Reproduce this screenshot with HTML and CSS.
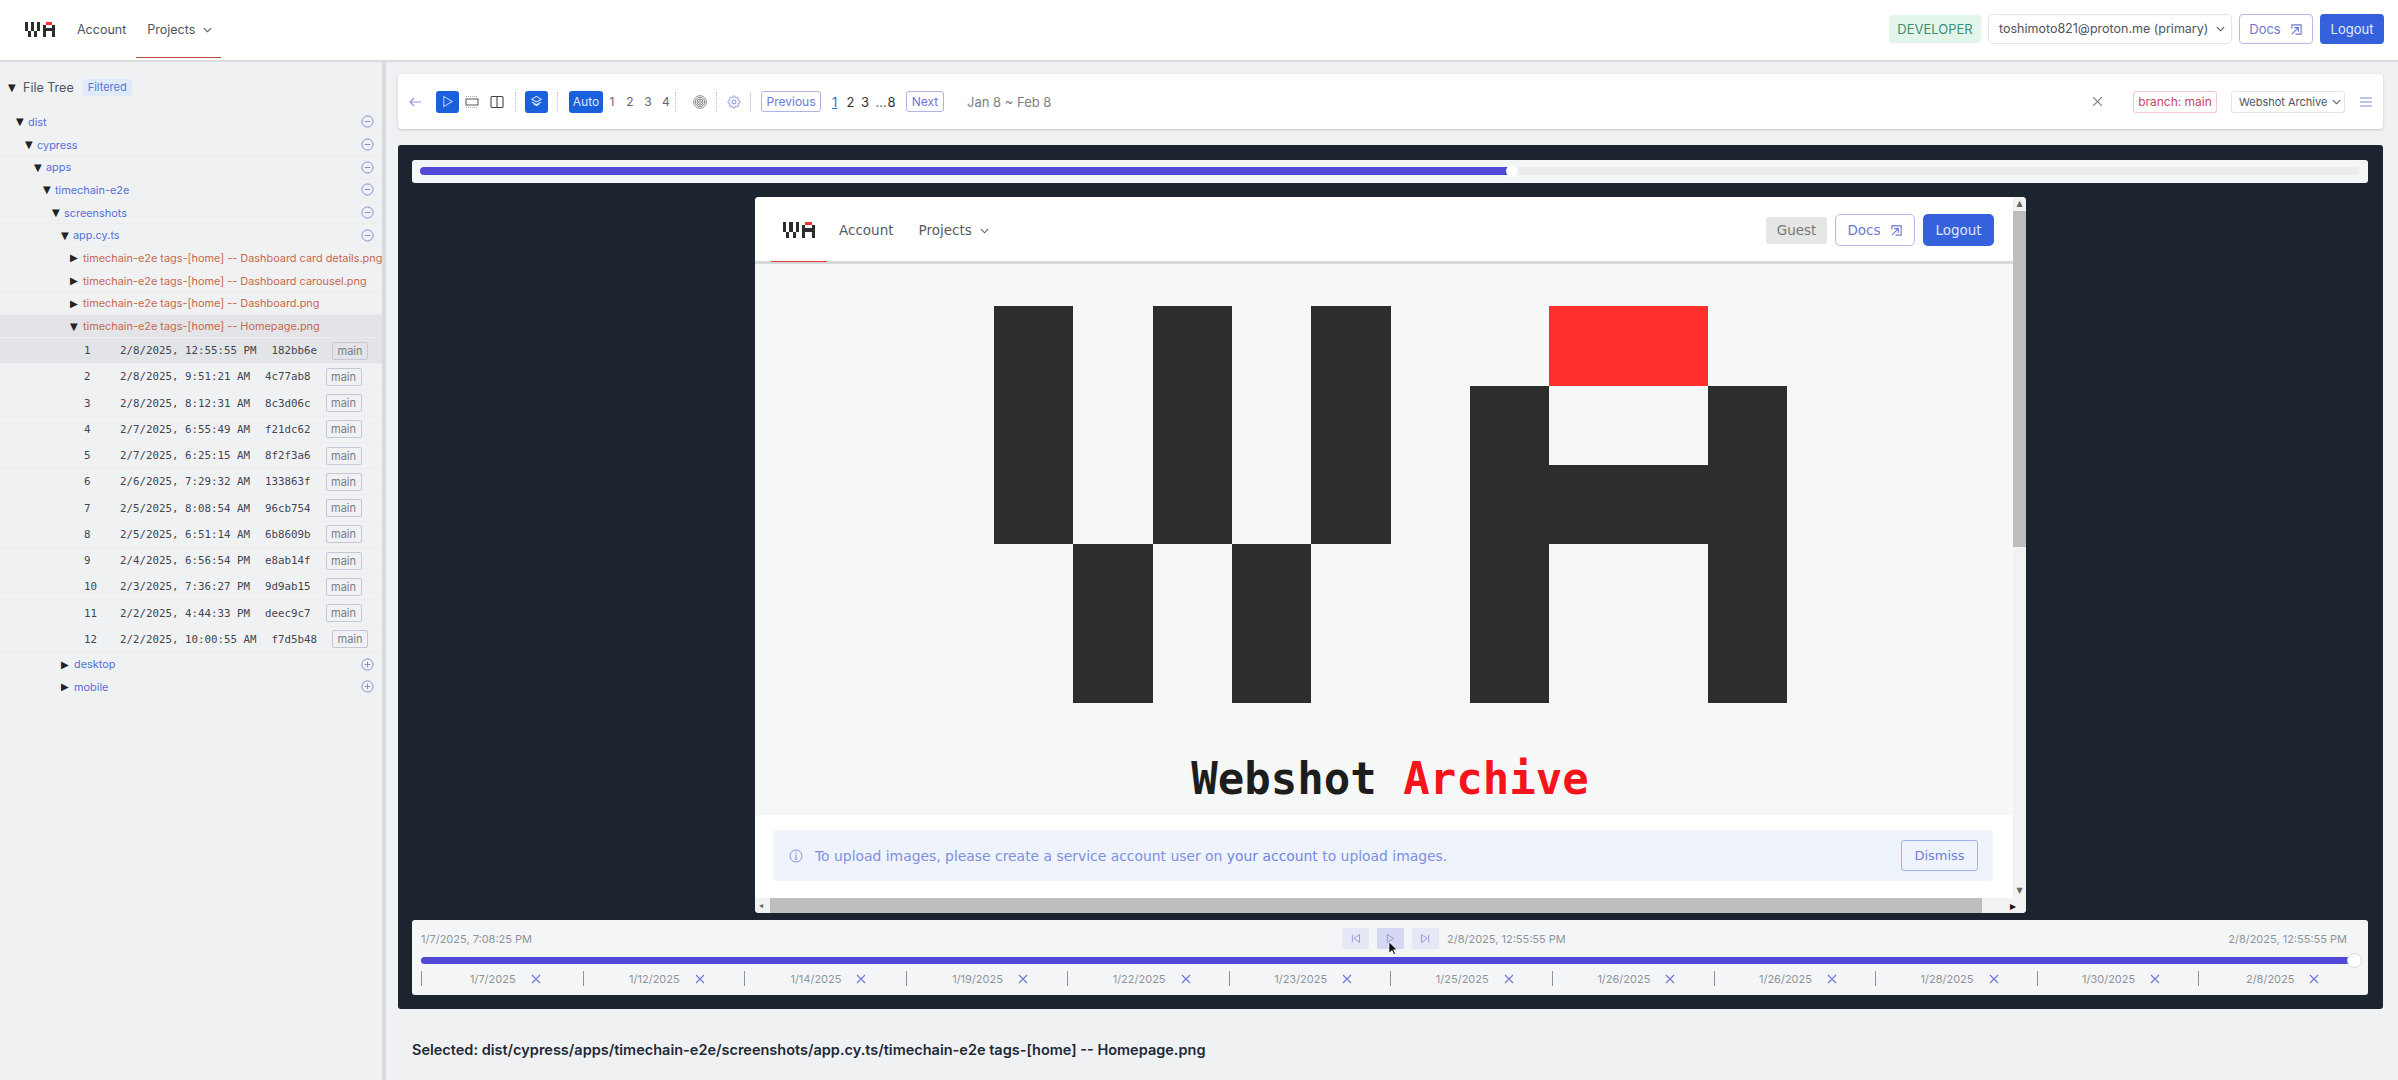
FILE: index.html
```html
<!DOCTYPE html>
<html lang="en">
<head>
    <meta charset="UTF-8">
    <title>Webshot Archive</title>
    <link rel="stylesheet" href="styles.css">
</head>
<body>
    <svg class="defs" width="0" height="0">
        <symbol id="wa" viewBox="0 0 10 5" shape-rendering="crispEdges">
            <path d="M0 0h1v3H0zM1 3h1v2H1zM2 0h1v3H2zM3 3h1v2H3zM4 0h1v3H4zM6 1h1v1h2V1h1v4H9V3H7v2H6z" fill="#2d2d2d"/>
            <rect x="7" y="0" width="2" height="1" fill="#ff302c"/>
        </symbol>
        <symbol id="chev" viewBox="0 0 10 6"><path d="M1 1l4 4 4-4" fill="none" stroke="currentColor" stroke-width="1.2"/></symbol>
        <symbol id="ext" viewBox="0 0 14 14"><path d="M2 6V2H12V12H6M2 12L9 5M4.500 5H9V9.500" fill="none" stroke="currentColor" stroke-width="1.2"/></symbol>
        <symbol id="minus" viewBox="0 0 14 14"><circle cx="7" cy="7" r="6" fill="none" stroke="currentColor"/><path d="M4 7h6" stroke="currentColor"/></symbol>
        <symbol id="plus" viewBox="0 0 14 14"><circle cx="7" cy="7" r="6" fill="none" stroke="currentColor"/><path d="M4 7h6M7 4v6" stroke="currentColor"/></symbol>
        <symbol id="x" viewBox="0 0 10 10"><path d="M1 1l8 8M9 1l-8 8" fill="none" stroke="currentColor" stroke-width="1.1"/></symbol>
    </svg>

    <header class="topbar">
        <svg class="logo-small"><use href="#wa"/></svg>
        <a class="nav-link">Account</a>
        <a class="nav-link nav-active">Projects <svg class="chev"><use href="#chev"/></svg></a>
        <div class="topbar-right">
            <span class="role">DEVELOPER</span>
            <span class="account-select">toshimoto821@proton.me (primary) <svg class="chev"><use href="#chev"/></svg></span>
            <a class="btn-docs">Docs <svg class="ext"><use href="#ext"/></svg></a>
            <a class="btn-logout">Logout</a>
        </div>
    </header>

    <div class="layout">
        <aside class="sidebar">
            <div class="tree-title"><span class="arrow">▼</span> File Tree <span class="filtered">Filtered</span></div>

            <div class="row d0"><span class="arrow">▼</span><span class="folder">dist</span><svg class="toggle"><use href="#minus"/></svg></div>
            <div class="row d1"><span class="arrow">▼</span><span class="folder">cypress</span><svg class="toggle"><use href="#minus"/></svg></div>
            <div class="row d2"><span class="arrow">▼</span><span class="folder">apps</span><svg class="toggle"><use href="#minus"/></svg></div>
            <div class="row d3"><span class="arrow">▼</span><span class="folder">timechain-e2e</span><svg class="toggle"><use href="#minus"/></svg></div>
            <div class="row d4"><span class="arrow">▼</span><span class="folder">screenshots</span><svg class="toggle"><use href="#minus"/></svg></div>
            <div class="row d5"><span class="arrow">▼</span><span class="folder">app.cy.ts</span><svg class="toggle"><use href="#minus"/></svg></div>
            <div class="row d6"><span class="arrow">▶</span><span class="file">timechain-e2e tags-[home] -- Dashboard card details.png</span></div>
            <div class="row d6"><span class="arrow">▶</span><span class="file">timechain-e2e tags-[home] -- Dashboard carousel.png</span></div>
            <div class="row d6"><span class="arrow">▶</span><span class="file">timechain-e2e tags-[home] -- Dashboard.png</span></div>
            <div class="row d6 selected"><span class="arrow">▼</span><span class="file">timechain-e2e tags-[home] -- Homepage.png</span></div>

            <div class="commit selected"><span class="num">1</span><span>2/8/2025, 12:55:55 PM</span><span>182bb6e</span><span class="tag">main</span></div>
            <div class="commit"><span class="num">2</span><span>2/8/2025, 9:51:21 AM</span><span>4c77ab8</span><span class="tag">main</span></div>
            <div class="commit"><span class="num">3</span><span>2/8/2025, 8:12:31 AM</span><span>8c3d06c</span><span class="tag">main</span></div>
            <div class="commit"><span class="num">4</span><span>2/7/2025, 6:55:49 AM</span><span>f21dc62</span><span class="tag">main</span></div>
            <div class="commit"><span class="num">5</span><span>2/7/2025, 6:25:15 AM</span><span>8f2f3a6</span><span class="tag">main</span></div>
            <div class="commit"><span class="num">6</span><span>2/6/2025, 7:29:32 AM</span><span>133863f</span><span class="tag">main</span></div>
            <div class="commit"><span class="num">7</span><span>2/5/2025, 8:08:54 AM</span><span>96cb754</span><span class="tag">main</span></div>
            <div class="commit"><span class="num">8</span><span>2/5/2025, 6:51:14 AM</span><span>6b8609b</span><span class="tag">main</span></div>
            <div class="commit"><span class="num">9</span><span>2/4/2025, 6:56:54 PM</span><span>e8ab14f</span><span class="tag">main</span></div>
            <div class="commit"><span class="num">10</span><span>2/3/2025, 7:36:27 PM</span><span>9d9ab15</span><span class="tag">main</span></div>
            <div class="commit"><span class="num">11</span><span>2/2/2025, 4:44:33 PM</span><span>deec9c7</span><span class="tag">main</span></div>
            <div class="commit"><span class="num">12</span><span>2/2/2025, 10:00:55 AM</span><span>f7d5b48</span><span class="tag">main</span></div>

            <div class="row d5b"><span class="arrow">▶</span><span class="folder">desktop</span><svg class="toggle"><use href="#plus"/></svg></div>
            <div class="row d5b"><span class="arrow">▶</span><span class="folder">mobile</span><svg class="toggle"><use href="#plus"/></svg></div>
        </aside>

        <main class="main">
            <div class="toolbar">
                <svg class="tool-icon back" viewBox="0 0 14 14"><path d="M13 7H2M6 3L2 7l4 4" fill="none" stroke="#8f95e6" stroke-width="1.2"/></svg>
                <span class="tool-btn"><svg viewBox="0 0 14 14"><path d="M3 1.500l9 5.500-9 5.500z" fill="none" stroke="#b8c8f5" stroke-width="1.2"/></svg></span>
                <svg class="tool-icon" viewBox="0 0 14 14"><rect x="1" y="4" width="12" height="6" fill="none" stroke="#555" stroke-width="1"/><path d="M1 1.500h12M1 12.500h12" stroke="#aaa" stroke-dasharray="1 1"/></svg>
                <svg class="tool-icon" viewBox="0 0 14 14"><rect x="1" y="1.500" width="12" height="11" rx="1" fill="none" stroke="#444" stroke-width="1.1"/><path d="M7 1.500v11" stroke="#444" stroke-width="1.1"/></svg>
                <i class="sep dotted"></i>
                <span class="tool-btn"><svg viewBox="0 0 14 14"><path d="M7 1.500L12 4.500 7 7.500 2 4.500zM2 7.500l5 3 5-3M4 9.500l3 2 3-2" fill="none" stroke="#dce5fb" stroke-width="1.1"/></svg></span>
                <i class="sep dotted sep-wide"></i>
                <span class="auto">Auto</span>
                <span class="zoom-level">1</span>
                <span class="zoom-level">2</span>
                <span class="zoom-level">3</span>
                <span class="zoom-level">4</span>
                <i class="sep dotted sep-wide2"></i>
                <svg class="tool-icon print" viewBox="0 0 14 14" fill="none" stroke="#85878b"><circle cx="7" cy="7" r="6.300"/><circle cx="7" cy="7" r="4.600"/><circle cx="7" cy="7" r="3"/><circle cx="7" cy="7" r="1.400"/></svg>
                <i class="sep dotted"></i>
                <svg class="tool-icon gear" viewBox="0 0 24 24" fill="none" stroke="#8086dd" stroke-width="1.5"><path d="M10.343 3.940c.09-.542.56-.94 1.110-.94h1.093c.55 0 1.020.398 1.110.94l.149.894c.07.424.384.764.78.93.398.164.855.142 1.205-.108l.737-.527a1.125 1.125 0 011.450.12l.773.774c.39.389.44 1.002.12 1.450l-.527.737c-.25.35-.272.806-.107 1.204.165.397.505.71.93.78l.893.15c.543.09.94.56.94 1.109v1.094c0 .55-.397 1.020-.94 1.110l-.893.149c-.425.07-.765.383-.93.78-.165.398-.143.854.107 1.204l.527.738c.32.447.269 1.060-.12 1.450l-.774.773a1.125 1.125 0 01-1.449.12l-.738-.527c-.35-.25-.806-.272-1.203-.107-.397.165-.71.505-.781.929l-.149.894c-.09.542-.56.94-1.110.94h-1.094c-.55 0-1.019-.398-1.110-.94l-.148-.894c-.071-.424-.384-.764-.781-.93-.398-.164-.854-.142-1.204.108l-.738.527c-.447.32-1.060.269-1.450-.12l-.773-.774a1.125 1.125 0 01-.12-1.450l.527-.737c.25-.35.273-.806.108-1.204-.165-.397-.505-.71-.93-.78l-.894-.15c-.542-.09-.94-.56-.94-1.109v-1.094c0-.55.398-1.020.94-1.110l.894-.149c.424-.07.765-.383.93-.78.165-.398.143-.854-.107-1.204l-.527-.738a1.125 1.125 0 01.12-1.450l.773-.773a1.125 1.125 0 011.450-.12l.737.527c.35.25.807.272 1.204.107.397-.165.71-.505.78-.929l.15-.894z"/><circle cx="12" cy="12" r="3"/></svg>
                <i class="sep"></i>
                <a class="page-btn prev">Previous</a>
                <span class="pages"><u>1</u><span>2</span><span>3</span><em>...</em><span>8</span></span>
                <a class="page-btn next">Next</a>
                <span class="range">Jan 8 ~ Feb 8</span>
                <div class="toolbar-right">
                    <svg class="close" viewBox="0 0 10 10"><use href="#x"/></svg>
                    <span class="branch">branch: main</span>
                    <span class="project">Webshot Archive <svg class="chev"><use href="#chev"/></svg></span>
                    <svg class="menu" viewBox="0 0 14 10"><path d="M1 1h12M1 5h12M1 9h12" stroke="#7f85dc" stroke-width="1"/></svg>
                </div>
            </div>

            <section class="panel">
                <div class="progress-card">
                    <div class="track"><div class="fill"></div><span class="knob"></span></div>
                </div>

                <div class="frame">
                    <div class="frame-body">
                        <div class="frame-page">
                            <div class="frame-nav">
                                <svg class="frame-logo"><use href="#wa"/></svg>
                                <a class="frame-link">Account</a>
                                <a class="frame-link">Projects <svg class="chev"><use href="#chev"/></svg></a>
                                <span class="frame-underline"></span>
                                <div class="frame-right">
                                    <span class="guest">Guest</span>
                                    <a class="frame-docs">Docs <svg class="ext"><use href="#ext"/></svg></a>
                                    <a class="frame-logout">Logout</a>
                                </div>
                            </div>
                            <div class="hero">
                                <svg class="hero-logo"><use href="#wa"/></svg>
                                <div class="wordmark">Webshot <span>Archive</span></div>
                            </div>
                            <div class="notice-wrap">
                                <div class="notice">
                                    <svg class="info" viewBox="0 0 14 14"><circle cx="7" cy="7" r="6" fill="none" stroke="currentColor"/><path d="M7 6.200v4M5.800 10.200h2.400M6 6.200h1" fill="none" stroke="currentColor"/><circle cx="7" cy="4" r=".7" fill="currentColor"/></svg>
                                    <span>To upload images, please create a service account user on <a>your account</a> to upload images.</span>
                                    <button class="dismiss">Dismiss</button>
                                </div>
                            </div>
                        </div>
                        <div class="vscroll">
                            <span class="scroll-arrow">▲</span>
                            <div class="vthumb"></div>
                            <span class="scroll-arrow">▼</span>
                        </div>
                    </div>
                    <div class="hscroll">
                        <span class="scroll-arrow">◂</span>
                        <div class="hthumb"></div>
                        <span class="scroll-arrow dark">▸</span>
                    </div>
                </div>

                <div class="timeline">
                    <div class="time-row">
                        <span>1/7/2025, 7:08:25 PM</span>
                        <div class="controls">
                            <span class="ctl"><svg viewBox="0 0 14 14"><path d="M3 2v10M12 2L5 7l7 5z" fill="none" stroke="#7f85dc"/></svg></span>
                            <span class="ctl ctl-on"><svg viewBox="0 0 14 14"><path d="M3 2l8 5-8 5z" fill="none" stroke="#7f85dc"/></svg></span>
                            <span class="ctl"><svg viewBox="0 0 14 14"><path d="M11 2v10M2 2l7 5-7 5z" fill="none" stroke="#7f85dc"/></svg></span>
                            <span>2/8/2025, 12:55:55 PM</span>
                        </div>
                        <span class="time-end">2/8/2025, 12:55:55 PM</span>
                    </div>
                    <div class="time-bar"><span class="time-knob"></span></div>
                    <div class="ticks">
                        <div class="tick">1/7/2025 <svg><use href="#x"/></svg></div>
                        <div class="tick">1/12/2025 <svg><use href="#x"/></svg></div>
                        <div class="tick">1/14/2025 <svg><use href="#x"/></svg></div>
                        <div class="tick">1/19/2025 <svg><use href="#x"/></svg></div>
                        <div class="tick">1/22/2025 <svg><use href="#x"/></svg></div>
                        <div class="tick">1/23/2025 <svg><use href="#x"/></svg></div>
                        <div class="tick">1/25/2025 <svg><use href="#x"/></svg></div>
                        <div class="tick">1/26/2025 <svg><use href="#x"/></svg></div>
                        <div class="tick">1/26/2025 <svg><use href="#x"/></svg></div>
                        <div class="tick">1/28/2025 <svg><use href="#x"/></svg></div>
                        <div class="tick">1/30/2025 <svg><use href="#x"/></svg></div>
                        <div class="tick">2/8/2025 <svg><use href="#x"/></svg></div>
                    </div>
                    <svg class="cursor" viewBox="0 0 10 15"><path d="M1 1v11l3-2.500 2 4 1.500-.7-2-4H9z" fill="#111" stroke="#fff" stroke-width=".6"/></svg>
                </div>
            </section>

            <div class="selected-path">Selected: dist/cypress/apps/timechain-e2e/screenshots/app.cy.ts/timechain-e2e tags-[home] -- Homepage.png</div>
        </main>
    </div>
</body>
</html>
```

FILE: styles.css
```css
* {
    box-sizing: border-box;
}
body {
    margin: 0;
    height: 1080px;
    overflow: hidden;
    background-color: #f0f1f3;
    font-family: Inter, "Liberation Sans", sans-serif;
    font-size: 13px;
    color: #374151;
}
.defs {
    position: absolute;
}
.chev {
    width: 9px;
    height: 6px;
    margin-left: 4px;
    vertical-align: 1px;
}

/* top bar */
.topbar {
    height: 62px;
    background-color: #fffffd;
    border-bottom: 2px solid #dcdde0;
    display: flex;
    align-items: center;
    padding-left: 25px;
    padding-right: 14px;
    padding-bottom: 2px;
}
.logo-small {
    width: 30px;
    height: 15px;
    margin-right: 22px;
}
.nav-link {
    color: #4b5563;
    margin-right: 21px;
    font-size: 12.500px;
}
.nav-active {
    position: relative;
}
.nav-active::after {
    content: "";
    position: absolute;
    left: -11px;
    right: -9px;
    top: 35px;
    height: 1px;
    background-color: #b5483f;
}
.topbar-right {
    margin-left: auto;
    display: flex;
    align-items: center;
}
.role {
    width: 92px;
    height: 28px;
    line-height: 28px;
    text-align: center;
    background-color: #e2f5ea;
    color: #3f8f73;
    border-radius: 3px;
    margin-right: 7px;
}
.account-select {
    width: 244px;
    height: 30px;
    line-height: 28px;
    border: 1px solid #e2e4e8;
    border-radius: 5px;
    padding-left: 10px;
    background-color: #fff;
    color: #4b5563;
    margin-right: 7px;
    font-size: 12.500px;
    white-space: nowrap;
}
.btn-docs {
    width: 74px;
    height: 30px;
    border: 1px solid #b4b9ea;
    border-radius: 4px;
    color: #6e78d2;
    display: flex;
    align-items: center;
    justify-content: center;
    margin-right: 7px;
}
.ext {
    width: 13px;
    height: 13px;
    margin-left: 9px;
}
.btn-logout {
    width: 64px;
    height: 30px;
    line-height: 30px;
    text-align: center;
    background-color: #3561dc;
    color: #e4e9fb;
    border-radius: 4px;
}

/* page columns */
.layout {
    display: flex;
    height: 1018px;
}
.sidebar {
    width: 386px;
    flex-shrink: 0;
    border-right: 4px solid #d9dadd;
    font-size: 10.900px;
    padding-top: 16px;
}
.tree-title {
    height: 18px;
    margin-bottom: 15px;
    padding-left: 8px;
    display: flex;
    align-items: center;
    color: #4b5563;
    font-size: 12.500px;
}
.tree-title .arrow {
    margin-right: 7px;
}
.filtered {
    margin-left: 9px;
    background-color: #dfeafa;
    color: #5a74d8;
    padding: 0 5px;
    height: 17px;
    line-height: 17px;
    border-radius: 3px;
    font-size: 11px;
}
.arrow {
    font-family: "DejaVu Sans", sans-serif;
    font-size: 10px;
    color: #222;
    width: 8px;
    flex-shrink: 0;
}
.row {
    height: 22.700px;
    display: flex;
    align-items: center;
    border-bottom: 1px solid #ebecee;
    white-space: nowrap;
    padding-right: 8px;
}
.row .arrow {
    margin-left: -2px;
    margin-right: 4px;
}
.d0 { padding-left: 18px; }
.d1 { padding-left: 27px; }
.d2 { padding-left: 36px; }
.d3 { padding-left: 45px; }
.d4 { padding-left: 54px; }
.d5 { padding-left: 63px; }
.d5b { padding-left: 63px; border-bottom: none; }
.row.d5b .arrow { margin-right: 5px; }
.d6 { padding-left: 72px; padding-right: 0; }
.row.d6 .arrow { margin-right: 5px; }
.selected {
    background-color: #e2e4e7;
}
.folder {
    color: #5570d8;
}
.file {
    color: #c8694f;
}
.toggle {
    margin-left: auto;
    width: 13px;
    height: 13px;
    color: #7d86d8;
}
.commit {
    height: 26.250px;
    display: flex;
    align-items: center;
    gap: 15px;
    font-family: "DejaVu Sans Mono", monospace;
    font-size: 10.800px;
    color: #3f4650;
    padding-left: 84px;
    border-bottom: 1px solid #ebecee;
    white-space: nowrap;
}
.commit .num {
    width: 21px;
    flex-shrink: 0;
}
.tag {
    font-family: Inter, sans-serif;
    font-size: 11px;
    color: #777d87;
    border: 1px solid #c4c8d6;
    border-radius: 2px;
    width: 36px;
    height: 18px;
    line-height: 16px;
    text-align: center;
}

/* main column */
.main {
    flex: 1;
    padding: 12px 15px 0 12px;
    min-width: 0;
}
.toolbar {
    height: 55px;
    background-color: #fff;
    border-radius: 4px;
    box-shadow: 0 1px 3px rgba(0, 0, 0, 0.18);
    display: flex;
    align-items: center;
    padding-left: 10px;
    font-size: 12px;
}
.tool-icon {
    width: 14px;
    height: 14px;
    margin-right: 11px;
}
.back {
    margin-right: 14px;
}
.tool-btn {
    width: 23px;
    height: 22px;
    background-color: #1a5fdc;
    border-radius: 3px;
    display: flex;
    align-items: center;
    justify-content: center;
    margin-right: 6px;
}
.tool-btn svg {
    width: 13px;
    height: 13px;
}
.sep {
    width: 0;
    height: 20px;
    border-left: 1px solid #d4d6e4;
    margin: 0 9px 0 0;
}
.sep.dotted {
    border-left-style: dotted;
    border-color: #b8bbd8;
}
.sep-wide {
    margin-left: 3px;
    margin-right: 11px;
}
.sep-wide2 {
    margin-right: 17px;
}
.auto {
    width: 34px;
    height: 22px;
    line-height: 22px;
    text-align: center;
    background-color: #1a5fdc;
    color: #dfe7fb;
    border-radius: 3px;
}
.zoom-level {
    width: 18px;
    text-align: center;
    color: #5f6570;
}
.print {
    margin-right: 9px;
}
.gear {
    width: 16px;
    height: 16px;
    margin-right: 8px;
}
.page-btn {
    height: 21px;
    line-height: 19px;
    border: 1px solid #b0b3e8;
    border-radius: 3px;
    text-align: center;
    color: #6f75d8;
}
.prev {
    width: 60px;
    margin-left: 1px;
}
.next {
    width: 38px;
}
.pages {
    width: 85px;
    padding-left: 11px;
    display: flex;
    color: #333;
    font-size: 13px;
}
.pages u {
    color: #2f6fe0;
    width: 14.500px;
}
.pages span {
    width: 14.500px;
}
.pages em {
    font-style: normal;
    color: #666;
    width: 12px;
}
.range {
    margin-left: 23px;
    font-size: 13px;
    color: #7b8089;
}
.toolbar-right {
    margin-left: auto;
    display: flex;
    align-items: center;
}
.close {
    width: 11px;
    height: 11px;
    color: #7b8089;
    margin-right: 30px;
}
.branch {
    width: 84px;
    height: 22px;
    line-height: 20px;
    text-align: center;
    border: 1px solid #f2c6d2;
    border-radius: 3px;
    color: #c8466c;
    margin-right: 14px;
}
.project {
    width: 114px;
    height: 22px;
    line-height: 20px;
    border: 1px solid #e1e3e9;
    border-radius: 3px;
    padding-left: 7px;
    white-space: nowrap;
    color: #4b5563;
    font-size: 11px;
    margin-right: 14px;
}
.project .chev {
    margin-left: 1px;
}
.menu {
    width: 14px;
    height: 10px;
    margin-right: 10px;
}

/* dark panel */
.panel {
    margin-top: 16px;
    height: 864px;
    background-color: #1c2430;
    border-radius: 3px;
    padding: 15px 15px 14px 14px;
}
.progress-card {
    height: 23px;
    background-color: #f4f5f6;
    border-radius: 3px;
    padding: 7px 8px;
}
.track {
    height: 8px;
    border-radius: 4px;
    background-color: #ebecee;
    position: relative;
}
.fill {
    width: 56.300%;
    height: 8px;
    background-color: #4f49d6;
    border-radius: 4px;
}
.knob {
    position: absolute;
    left: 56.300%;
    top: -2px;
    width: 12px;
    height: 12px;
    margin-left: -6px;
    border-radius: 50%;
    background-color: #fff;
}
.frame {
    width: 1271px;
    height: 716px;
    margin: 14px 0 0 343px;
    background-color: #f6f7f7;
    border-radius: 4px;
    overflow: hidden;
    display: flex;
    flex-direction: column;
    font-family: "DejaVu Sans", sans-serif;
}
.frame-body {
    flex: 1;
    display: flex;
    min-height: 0;
}
.frame-page {
    flex: 1;
    display: flex;
    flex-direction: column;
    min-width: 0;
}
.frame-nav {
    height: 67px;
    flex-shrink: 0;
    background-color: #fffffd;
    border-bottom: 3px solid #d7d8da;
    display: flex;
    align-items: center;
    padding-left: 28px;
    padding-top: 2px;
    position: relative;
    font-size: 13.500px;
}
.frame-logo {
    width: 32px;
    height: 16px;
    margin-right: 24px;
}
.frame-link {
    color: #555b66;
    margin-right: 25px;
}
.frame-underline {
    position: absolute;
    left: 16px;
    width: 56px;
    bottom: -1px;
    height: 1px;
    background-color: #d9423f;
}
.frame-right {
    margin-left: auto;
    display: flex;
    align-items: center;
    margin-right: 19px;
}
.guest {
    width: 61px;
    height: 27px;
    line-height: 27px;
    text-align: center;
    background-color: #e5e6e6;
    color: #777;
    border-radius: 3px;
    margin-right: 8px;
}
.frame-docs {
    width: 80px;
    height: 32px;
    border: 1px solid #b4b9ea;
    border-radius: 5px;
    color: #6e78d2;
    display: flex;
    align-items: center;
    justify-content: center;
    margin-right: 8px;
}
.frame-logout {
    width: 71px;
    height: 32px;
    line-height: 32px;
    text-align: center;
    background-color: #3561dc;
    color: #dfe5fa;
    border-radius: 5px;
}
.hero {
    flex: 1;
    padding: 42px 0 0 12px;
    display: flex;
    flex-direction: column;
    align-items: center;
}
.hero-logo {
    width: 793px;
    height: 397px;
    flex-shrink: 0;
}
.wordmark {
    margin-top: 51px;
    font-family: "DejaVu Sans Mono", monospace;
    font-weight: bold;
    font-size: 44px;
    line-height: 50px;
    color: #1d1d1d;
    white-space: nowrap;
}
.wordmark span {
    color: #f5141c;
}
.notice-wrap {
    height: 83px;
    flex-shrink: 0;
    background-color: #fff;
    padding: 15px 20px 16px 18px;
}
.notice {
    height: 51px;
    background-color: #eef3fc;
    border-radius: 4px;
    display: flex;
    align-items: center;
    padding-left: 16px;
    padding-right: 15px;
    color: #7f8fe0;
    font-size: 13.900px;
}
.notice a {
    color: #6f86e0;
}
.info {
    width: 14px;
    height: 14px;
    margin-right: 12px;
}
.dismiss {
    margin-left: auto;
    width: 77px;
    height: 31px;
    background-color: transparent;
    border: 1px solid #9fb4ea;
    border-radius: 3px;
    color: #6e7fd8;
    font-family: inherit;
    font-size: 13px;
}
.vscroll {
    width: 13px;
    flex-shrink: 0;
    background-color: #f2f2f2;
    display: flex;
    flex-direction: column;
    align-items: center;
}
.scroll-arrow {
    height: 14px;
    line-height: 14px;
    font-size: 8px;
    color: #666;
}
.scroll-arrow.dark {
    color: #111;
    font-size: 12px;
}
.vthumb {
    width: 13px;
    height: 336px;
    background-color: #bdbec0;
}
.vscroll .scroll-arrow:last-child {
    margin-top: auto;
}
.hscroll {
    height: 15px;
    flex-shrink: 0;
    background-color: #f2f2f2;
    display: flex;
    align-items: center;
    padding: 0 10px 0 4px;
}
.hthumb {
    width: 1212px;
    height: 15px;
    margin-left: 7px;
    background-color: #bdbec0;
}
.hscroll .dark {
    margin-left: auto;
}

/* timeline card */
.timeline {
    margin-top: 7px;
    height: 75px;
    background-color: #f4f5f6;
    border-radius: 3px;
    padding: 8px 8px 0 9px;
    position: relative;
    font-size: 11px;
    color: #8f949c;
}
.time-row {
    height: 21px;
    display: grid;
    grid-template-columns: 921px auto 1fr;
    align-items: center;
}
.controls {
    display: flex;
    align-items: center;
    gap: 8px;
}
.ctl {
    width: 27px;
    height: 21px;
    background-color: #e6e8f6;
    display: flex;
    align-items: center;
    justify-content: center;
}
.ctl-on {
    background-color: #d4d8f2;
}
.ctl svg {
    width: 11px;
    height: 11px;
}
.time-end {
    text-align: right;
    padding-right: 13px;
}
.time-bar {
    margin-top: 8px;
    height: 7px;
    border-radius: 4px;
    background-color: #4f49d6;
    position: relative;
}
.time-knob {
    position: absolute;
    right: -2px;
    top: -4px;
    width: 15px;
    height: 15px;
    border-radius: 50%;
    background-color: #fff;
    border: 1px solid #d6d8dc;
}
.ticks {
    margin-top: 7px;
    display: grid;
    grid-template-columns: repeat(12, 1fr);
}
.tick {
    height: 15px;
    border-left: 1px solid #8f949c;
    display: flex;
    align-items: center;
    justify-content: center;
    gap: 15px;
    font-size: 11px;
    padding-left: 6px;
}
.tick svg {
    width: 10px;
    height: 10px;
    color: #6d76d8;
}
.cursor {
    position: absolute;
    left: 976px;
    top: 21px;
    width: 10px;
    height: 15px;
}
.selected-path {
    margin-top: 32px;
    margin-left: 14px;
    font-size: 14.500px;
    font-weight: 600;
    color: #1f2937;
    white-space: nowrap;
}
```
